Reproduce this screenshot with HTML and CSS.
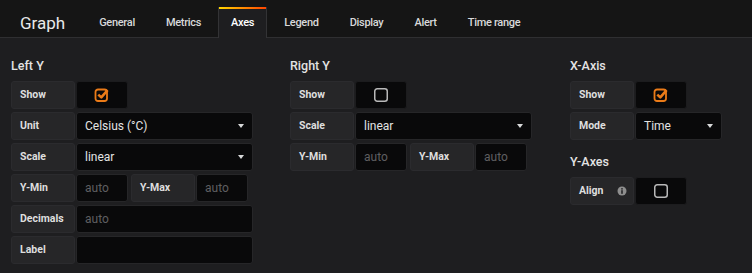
FILE: index.html
```html
<!DOCTYPE html>
<html lang="en">
<head>
  <meta charset="UTF-8" />
  <title>Graph - Axes</title>
  <link rel="stylesheet" href="styles.css">
</head>
<body>
  <header class="edit-header">
    <h2 class="edit-title">Graph</h2>
    <ul class="tabs">
      <li class="tab">General</li>
      <li class="tab">Metrics</li>
      <li class="tab active">Axes</li>
      <li class="tab">Legend</li>
      <li class="tab">Display</li>
      <li class="tab">Alert</li>
      <li class="tab">Time range</li>
    </ul>
  </header>

  <main class="edit-body">
    <section class="axis col-left">
      <h5 class="section-title">Left Y</h5>
      <div class="form">
        <span class="form-label">Show</span>
        <span class="checkbox-cell">
          <svg width="16" height="16" viewBox="0 0 16 16"><rect x="1.5" y="2.5" width="11.5" height="11.5" rx="2.5" fill="none" stroke="#eb7b18" stroke-width="1.8"/><path d="M4.3 7.6 L7.3 10.4 L13.6 3.2" fill="none" stroke="#eb7b18" stroke-width="2.6" stroke-linejoin="round"/></svg>
        </span>
      </div>
      <div class="form">
        <span class="form-label">Unit</span>
        <span class="select wide">Celsius (°C)<i class="caret"></i></span>
      </div>
      <div class="form">
        <span class="form-label">Scale</span>
        <span class="select wide">linear<i class="caret"></i></span>
      </div>
      <div class="form">
        <span class="form-label">Y-Min</span>
        <span class="input small placeholder">auto</span>
        <span class="form-label second">Y-Max</span>
        <span class="input small placeholder">auto</span>
      </div>
      <div class="form">
        <span class="form-label">Decimals</span>
        <span class="input wide placeholder">auto</span>
      </div>
      <div class="form">
        <span class="form-label">Label</span>
        <span class="input wide"></span>
      </div>
    </section>

    <section class="axis col-right">
      <h5 class="section-title">Right Y</h5>
      <div class="form">
        <span class="form-label">Show</span>
        <span class="checkbox-cell">
          <svg width="16" height="16" viewBox="0 0 16 16"><rect x="1.75" y="1.75" width="12.5" height="12.5" rx="2.5" fill="none" stroke="#b9b9b9" stroke-width="1.5"/></svg>
        </span>
      </div>
      <div class="form">
        <span class="form-label">Scale</span>
        <span class="select wide">linear<i class="caret"></i></span>
      </div>
      <div class="form">
        <span class="form-label">Y-Min</span>
        <span class="input small placeholder">auto</span>
        <span class="form-label second">Y-Max</span>
        <span class="input small placeholder">auto</span>
      </div>
    </section>

    <section class="axis col-x">
      <h5 class="section-title">X-Axis</h5>
      <div class="form">
        <span class="form-label">Show</span>
        <span class="checkbox-cell">
          <svg width="16" height="16" viewBox="0 0 16 16"><rect x="1.5" y="2.5" width="11.5" height="11.5" rx="2.5" fill="none" stroke="#eb7b18" stroke-width="1.8"/><path d="M4.3 7.6 L7.3 10.4 L13.6 3.2" fill="none" stroke="#eb7b18" stroke-width="2.6" stroke-linejoin="round"/></svg>
        </span>
      </div>
      <div class="form">
        <span class="form-label">Mode</span>
        <span class="select mode">Time<i class="caret"></i></span>
      </div>

      <h5 class="section-title spaced">Y-Axes</h5>
      <div class="form">
        <span class="form-label with-icon">Align
          <svg width="10" height="10" viewBox="0 0 10 10"><circle cx="5" cy="5" r="4.5" fill="#8e8e8e"/><rect x="4.2" y="4.2" width="1.6" height="3.6" fill="#262628"/><circle cx="5" cy="2.8" r="0.9" fill="#262628"/></svg>
        </span>
        <span class="checkbox-cell">
          <svg width="16" height="16" viewBox="0 0 16 16"><rect x="1.75" y="1.75" width="12.5" height="12.5" rx="2.5" fill="none" stroke="#b9b9b9" stroke-width="1.5"/></svg>
        </span>
      </div>
    </section>
  </main>
</body>
</html>
```

FILE: styles.css
```css
body {
  margin: 0;
  background: #1e1e20;
  color: #d8d9da;
  font-family: Roboto, "Liberation Sans", sans-serif;
  height: 273px;
  overflow: hidden;
}
.edit-header {
  display: flex;
  align-items: flex-end;
  height: 37px;
  background: #151515;
  border-bottom: 1px solid #2f2f31;
  padding-left: 20px;
}
.edit-title {
  margin: 0 20px 0 0;
  font-size: 17px;
  font-weight: 400;
  color: #e9e9e9;
  line-height: 30px;
  align-self: center;
  padding-top: 8px;
}
.tabs {
  display: flex;
  gap: 3px;
  list-style: none;
  margin: 0 0 -1px 0;
  padding: 0;
}
.tab {
  height: 30px;
  line-height: 30px;
  padding: 0 13px;
  font-size: 11px;
  letter-spacing: -0.3px;
  font-weight: 500;
  color: #d8d9da;
  border: 1px solid transparent;
  border-bottom: none;
}
.tab.active {
  background: linear-gradient(to right, #ffd500, #ff4400) top / 100% 2px no-repeat, #1e1e20;
  border-color: #333335;
  border-top: none;
  color: #fff;
  height: 29px;
  line-height: 27px;
  padding: 2px 12px 0;
}
.edit-body {
  display: flex;
  gap: 37px;
  padding: 0 11px;
}
.axis {
  width: 242px;
}
.col-x {
  width: auto;
  margin-left: 1px;
}
.section-title {
  margin: 20px 0 7px;
  font-size: 12.5px;
  line-height: 16px;
  font-weight: 500;
  color: #e3e3e3;
}
.section-title.spaced {
  margin-top: 14px;
}
.form {
  display: flex;
  height: 28px;
  margin-bottom: 3px;
}
.form-label {
  width: 64px;
  box-sizing: border-box;
  padding: 0 8px;
  background: #262628;
  border: 1px solid #2b2b2e;
  border-radius: 3px;
  margin-right: 1px;
  font-size: 10.5px;
  font-weight: 700;
  line-height: 26px;
  color: #dedede;
}
.form-label.second {
  margin-left: 3px;
}
.form-label.with-icon {
  display: flex;
  align-items: center;
  justify-content: space-between;
  padding-right: 6px;
}
.checkbox-cell {
  width: 50px;
  background: #09090a;
  border: 1px solid #1c1c1e;
  border-radius: 3px;
  display: flex;
  align-items: center;
  justify-content: center;
}
.select, .input {
  box-sizing: border-box;
  background: #09090a;
  border: 1px solid #262628;
  border-radius: 3px;
  padding: 0 8px;
  font-size: 12px;
  line-height: 26px;
  color: #e3e3e3;
  position: relative;
}
.wide {
  flex: 1;
}
.mode {
  width: 87px;
}
.small {
  width: 52px;
}
.placeholder {
  color: #5f5f61;
}
.caret {
  position: absolute;
  right: 8px;
  top: 11px;
  border-left: 3.5px solid transparent;
  border-right: 3.5px solid transparent;
  border-top: 4px solid #d8d9da;
}
```
